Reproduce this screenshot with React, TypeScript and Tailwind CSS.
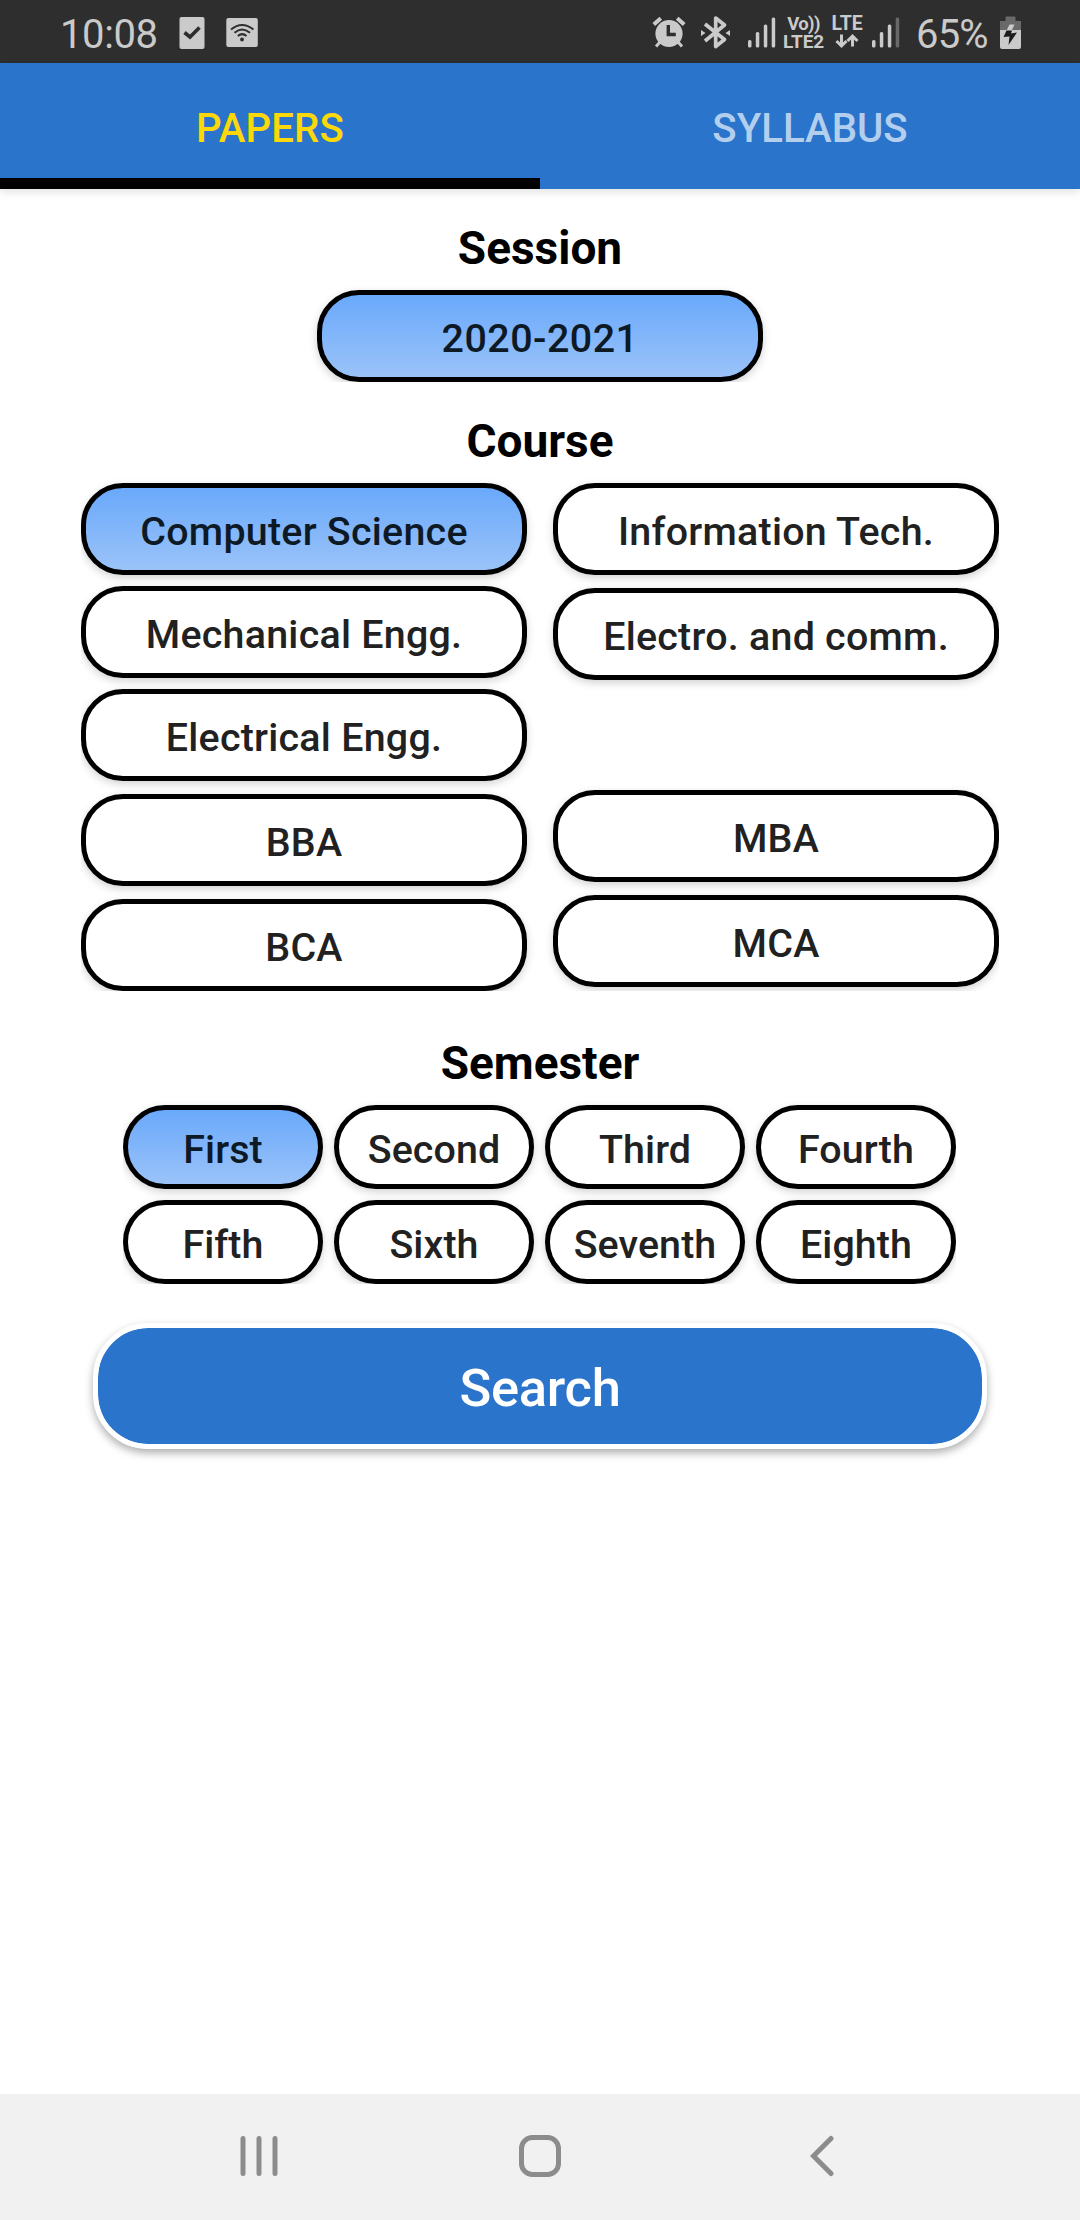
import type { ReactNode } from "react";

/* Status bar glyphs share the bar's coordinate space, so each viewBox starts at the glyph's left edge. */
function Glyph({ x, w, className = "", children }: { x: number; w: number; className?: string; children: ReactNode }) {
  return (
    <svg className={`block shrink-0 ${className}`} width={w} height={63} viewBox={`${x} 0 ${w} 63`} fill="#cacaca" stroke="none">
      {children}
    </svg>
  );
}

function StatusBar() {
  return (
    <header className="flex h-[63px] items-center bg-[#2e2e2e] pl-[60px] text-[#cacaca]">
      <span className="w-[119px] pt-[7px] text-[40px] leading-[44px] tracking-[-0.4px]">10:08</span>
      <Glyph x={179} w={26}>
        <rect x="179.5" y="17" width="25" height="32" rx="2" />
        <path d="M184.500 32.500l5.500 4.500 9.500-9.500" fill="none" stroke="#2e2e2e" strokeWidth="3.600" />
      </Glyph>
      <Glyph x={226} w={32} className="ml-[21px]">
        <rect x="226.300" y="18" width="31.500" height="29" rx="2" />
        <g fill="none" stroke="#2e2e2e" strokeWidth="2">
          <path d="M231 29.500q11-9 22.500 0" />
          <path d="M234.500 32.800q7.500-6.500 15.500 0" />
          <path d="M237.800 36q4.400-3.800 8.700 0" />
        </g>
        <circle cx="242" cy="39.500" r="1.900" fill="#2e2e2e" />
      </Glyph>

      <Glyph x={652} w={34} className="ml-auto">
        <circle cx="669" cy="33.500" r="13.600" />
        <g stroke="#cacaca" strokeWidth="4">
          <path d="M653.800 24.500l7-6.200M684.200 24.500l-7-6.200" />
          <path d="M660 42l-4 4.500M678 42l4 4.500" strokeWidth="3" />
        </g>
        <path d="M668.300 25v9.500h7.500" fill="none" stroke="#2e2e2e" strokeWidth="3.400" />
      </Glyph>
      <Glyph x={700} w={31} className="ml-[14px]">
        <path d="M705 24l19.500 15.500-8.800 7V18l8.800 7L705 41" fill="none" stroke="#cacaca" strokeWidth="3.700" strokeLinejoin="round" />
        <path d="M701 30l4.500 3-4.500 3zM730 30l-4.500 3 4.500 3z" />
      </Glyph>
      <Glyph x={747} w={30} className="ml-[16px]">
        <rect x="748" y="40" width="3.500" height="7.500" rx="1.500" />
        <rect x="755.800" y="32" width="3.500" height="15.500" rx="1.500" />
        <rect x="763.800" y="24.500" width="3.500" height="23" rx="1.500" />
        <rect x="771.700" y="17.500" width="3.500" height="30" rx="1.500" />
      </Glyph>
      <div className="ml-[5px] flex w-[43px] flex-col items-center pt-[2px] font-bold">
        <span className="text-[18.5px] leading-[18px] tracking-[-0.6px]">Vo))</span>
        <span className="text-[19px] leading-[18px] tracking-[-0.1px]">LTE2</span>
      </div>
      <div className="ml-[5px] flex w-[34px] flex-col items-center font-bold">
        <span className="h-[18px] text-[19.5px] leading-[19px] tracking-[-0.2px]">LTE</span>
        <svg width="24" height="18" viewBox="0 0 24 18" fill="none" stroke="#cacaca" strokeWidth="3">
          <path d="M6.500 2.500v11M1.500 9l5 5 5-5M17.500 14.500V4M12.500 9l5-5 5 5" />
        </svg>
      </div>
      <Glyph x={871} w={29} className="ml-[7px]">
        <rect x="872" y="40" width="3.500" height="7.500" rx="1.500" />
        <rect x="879.800" y="32" width="3.500" height="15.500" rx="1.500" />
        <rect x="887.800" y="24.500" width="3.500" height="23" rx="1.500" />
        <rect x="895.700" y="17.500" width="3.500" height="30" rx="1.500" fill="#696969" />
      </Glyph>
      <span className="ml-[16px] w-[84px] pt-[7px] text-[40px] leading-[44px] tracking-[-0.8px]">65%</span>
      <Glyph x={1000} w={21} className="mr-[59px]">
        <path d="M1005.500 21v-3.500q0-1 1-1h8q1 0 1 1V21h5.500v9h-21v-9z" fill="#696969" />
        <path d="M1000 30h21v17q0 2-2 2h-17q-2 0-2-2z" />
        <path d="M1009.500 24.500h5l-2.800 6h-5.200z" />
        <path d="M1006.500 30.500h5.500l-1 3 6-1-8.500 12.500 1-8.500-6 .5z" fill="#1c1c1c" />
      </Glyph>
    </header>
  );
}

type PillProps = { label: string; selected?: boolean; className?: string };

function Pill({ label, selected, className = "h-[92px] tracking-[0.25px]" }: PillProps) {
  return (
    <button
      className={`flex w-full shrink-0 items-center justify-center rounded-[42px] border-[5px] border-black bg-origin-border pt-[5px] text-[39.4px] leading-[46px] font-medium shadow-[0_3px_8px_rgba(0,0,0,0.18)] ${
        selected ? "bg-linear-to-b from-[#66a7fb] to-[#9dc4f8] text-[#0e1926]" : "bg-white text-[#212121]"
      } ${className}`}
    >
      {label}
    </button>
  );
}

function Heading({ children }: { children: ReactNode }) {
  return <h2 className="pt-px text-center text-[46px] leading-[55px] font-bold text-black">{children}</h2>;
}

const semesters = ["First", "Second", "Third", "Fourth", "Fifth", "Sixth", "Seventh", "Eighth"];

export default function App() {
  return (
    <div className="flex h-[2220px] w-[1080px] flex-col bg-white font-['Roboto',sans-serif]">
      <StatusBar />
      <nav className="grid h-[126px] shrink-0 grid-cols-2 bg-[#2a74cb] text-[40.2px] leading-[46px] font-medium shadow-[0_3px_9px_rgba(0,0,0,0.12)]">
        <button className="border-b-[11px] border-black pt-[16px] tracking-[0.1px] text-[#fcd808]">PAPERS</button>
        <button className="pt-[5px] text-[#b4cfee]">SYLLABUS</button>
      </nav>

      <main className="flex flex-1 flex-col items-center pt-[31px]">
        <Heading>Session</Heading>
        <div className="mt-[6px] h-[100px] overflow-hidden px-2 pt-2">
          <div className="w-[446px]">
            <Pill label="2020-2021" selected className="h-[92px] tracking-[0.5px]" />
          </div>
        </div>

        <div className="mt-[31px]">
          <Heading>Course</Heading>
        </div>
        <div className="mt-[6px] grid h-[516px] w-[918px] grid-cols-[446px_446px] justify-between overflow-hidden pt-2">
          <div className="flex flex-col gap-[11px]">
            <Pill label="Computer Science" selected />
            <Pill label="Mechanical Engg." />
            <Pill label="Electrical Engg." />
            <div className="flex flex-col gap-[13px] pt-[2px]">
              <Pill label="BBA" />
              <Pill label="BCA" />
            </div>
          </div>
          <div className="flex flex-col gap-[13px]">
            <Pill label="Information Tech." />
            <Pill label="Electro. and comm." />
            <div className="mt-[97px] flex flex-col gap-[13px]">
              <Pill label="MBA" />
              <Pill label="MCA" />
            </div>
          </div>
        </div>

        <div className="mt-[44px]">
          <Heading>Semester</Heading>
        </div>
        <div className="mt-[6px] mr-px grid h-[187px] w-[833px] grid-cols-4 gap-[11px] overflow-hidden pt-2">
          {semesters.map((name) => (
            <Pill key={name} label={name} selected={name === "First"} className="h-[84px] tracking-[0.1px]" />
          ))}
        </div>

        <button className="mt-[39px] flex h-[126px] w-[894px] items-center justify-center rounded-[55px] border-[5px] border-white bg-[#2a74cb] bg-clip-padding pt-[4px] text-[52.5px] leading-[60px] font-medium tracking-[-0.3px] text-white shadow-[0_4px_9px_rgba(0,0,0,0.32)]">
          Search
        </button>
      </main>

      <footer className="flex h-[126px] shrink-0 items-start justify-between bg-[#f1f1f1] pt-[41px] pr-[246px] pl-[240px]">
        <svg width="38" height="42" viewBox="0 0 38 42" fill="none" stroke="#8c8c8c" strokeWidth="5" strokeLinecap="round">
          <path d="M3 3.500v35M19 3.500v35M35 3.500v35" />
        </svg>
        <svg className="-ml-2" width="42" height="42" viewBox="0 0 42 42" fill="none" stroke="#8c8c8c" strokeWidth="5">
          <rect x="2.500" y="2.500" width="37" height="37" rx="11" />
        </svg>
        <svg width="24" height="42" viewBox="0 0 24 42" fill="none" stroke="#8c8c8c" strokeWidth="5" strokeLinecap="round">
          <path d="M21 3.500L3.500 21 21 38.500" />
        </svg>
      </footer>
    </div>
  );
}
